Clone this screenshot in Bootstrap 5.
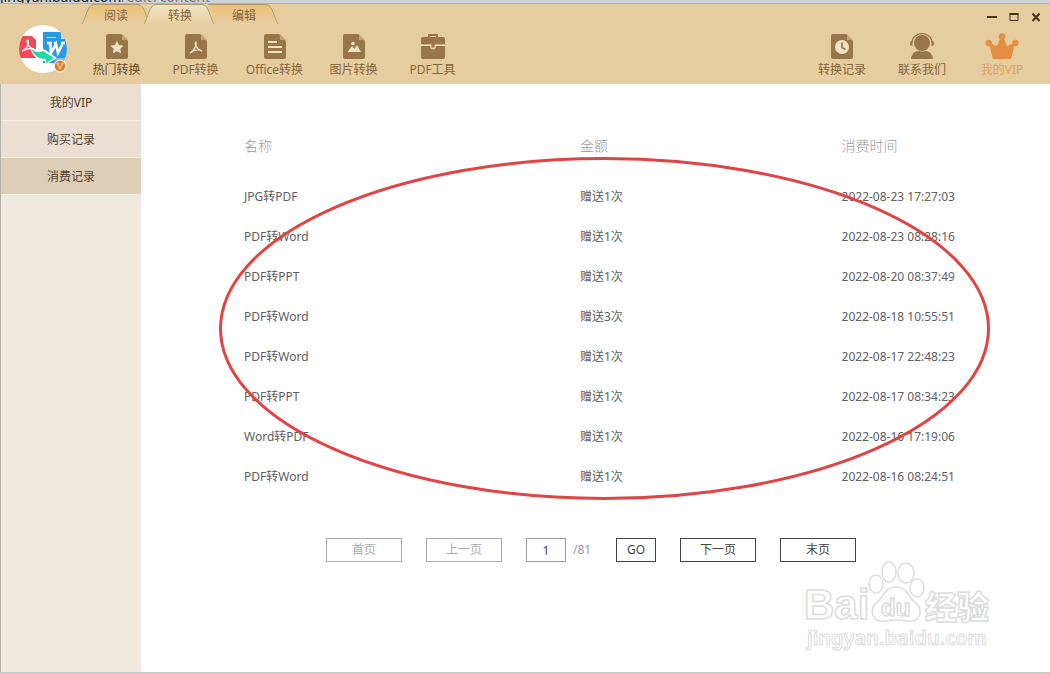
<!DOCTYPE html>
<html lang="zh-CN">
<head>
<meta charset="utf-8">
<meta name="viewport" content="width=device-width, initial-scale=1">
<title>消费记录</title>
<link href="https://cdn.jsdelivr.net/npm/bootstrap@5.3.0/dist/css/bootstrap.min.css" rel="stylesheet">
<style>
body{font-family:"Noto Sans","Noto Sans CJK SC",sans-serif;font-size:12px;line-height:18px;color:#555;background:#fff}
button{font-family:inherit}
.backdrop{height:4px;background:#cfd2d6;border-bottom:1px solid #b9b3a6}
.backdrop span{font-size:14px;line-height:12px;color:#222;white-space:nowrap}
.backdrop .dim{color:#777}
.app-head{background:#e5cda0;color:#86663c}
.tab-row{height:20px;padding-left:84px}
.tab-btn{width:64px;height:20px;padding:0;border:0;background:none;color:#86663c;font-size:12px;line-height:24px}
.tab-btn svg{left:-4px;top:0}
.tab-btn span{position:relative}
.tab-btn.current{z-index:1}
.win-ctl{gap:8px;padding-right:7px}
.win-ctl button{width:14px;height:14px;padding:0;border:0;background:none;line-height:0}
.tool-row{height:60px;padding-left:18px;padding-right:8px}
.logo{width:59px;padding-top:1px}
.tool{height:60px;width:79px;padding:4px 0 0;border:0;background:none;color:#86663c;font-size:12px;line-height:18px;text-align:center;white-space:nowrap}
.tool svg{display:block;margin:0 auto 2px}
.tool.wide{width:80px}
.tool.hot{color:#6b4a22}
.tool.vip{color:#e3a064}
.side{width:141px;background:#f1eadf;border-left:1px solid #b5b0a8}
.side a{height:37px;line-height:38px;text-align:center;text-decoration:none;color:#54412e;background:#eadfd2;border-bottom:1px solid #f5efe6}
.side a.active{background:#ddceb8}
.records{padding:31px 71px 0 103px}
.records table{margin:0;width:100%;table-layout:fixed}
.records th,.records td{padding:0;border:0;text-align:left;vertical-align:middle;white-space:nowrap}
.records th{height:62px;font-size:14px;font-weight:300;color:#999}
.records td{height:40px;font-weight:400;color:#606060}
.records .c-name{width:45.7%}
.records .c-sum{width:35.6%}
.pager{gap:24px;padding-right:9px;margin-top:41px}
.pager button{width:76px;height:24px;padding:0;border:1px solid #444;border-radius:0;background:#fff;color:#444;font-size:12px;line-height:22px}
.pager button:disabled{border-color:#aaa;color:#aaa;opacity:1}
.pager .go{width:40px}
.pager label{width:66px;gap:7px;color:#999}
.pager input{width:40px;height:24px;padding:0;border:1px solid #999;border-radius:0;text-align:center;font-size:12px;color:#444}
.ring{left:78px;top:72px}
.water{right:50px;bottom:16px}
.base{height:2px;background:#c9c9c9}
</style>
</head>
<body class="d-flex flex-column min-vh-100">
<div class="backdrop d-flex align-items-end overflow-hidden"><span>jingyan.baidu.com</span><span class="dim">/edit7content</span></div>

<header class="app-head">
  <div class="tab-row d-flex justify-content-between">
    <nav class="d-flex">
      <button class="tab-btn position-relative"><svg class="position-absolute" width="72" height="20" viewBox="0 0 72 20"><defs><linearGradient id="g1" x2="0" y2="1"><stop stop-color="#edbf73"/><stop offset="1" stop-color="#e6cfa1"/></linearGradient></defs><path d="M2 20C6 14 7 1 14 .5H58C65 1 66 14 70 20" fill="url(#g1)" stroke="#b39a6b"/></svg><span>阅读</span></button>
      <button class="tab-btn current position-relative"><svg class="position-absolute" width="72" height="20" viewBox="0 0 72 20"><defs><linearGradient id="g2" x2="0" y2="1"><stop stop-color="#f3e3c3"/><stop offset="1" stop-color="#e6cfa3"/></linearGradient></defs><path d="M0 20C4 14 5 1 12 .5H58C65 1 66 14 70 20" fill="url(#g2)" stroke="#b39a6b"/></svg><span>转换</span></button>
      <button class="tab-btn position-relative"><svg class="position-absolute" width="72" height="20" viewBox="0 0 72 20"><path d="M5 .5H58C65 1 66 14 70 20H7C4 14 4 1 0 .5Z" fill="url(#g1)"/><path d="M0 .5H58C65 1 66 14 70 20" fill="none" stroke="#b39a6b"/></svg><span>编辑</span></button>
    </nav>
    <div class="win-ctl d-flex align-items-end">
      <button aria-label="最小化"><svg width="14" height="14"><path d="M2 7H12" stroke="#4a3512" stroke-width="2"/></svg></button>
      <button aria-label="最大化"><svg width="14" height="14"><path d="M3 3.500H11V10.500H3Z" fill="none" stroke="#4a3512"/><path d="M2.500 4H11.500" stroke="#4a3512" stroke-width="2"/></svg></button>
      <button aria-label="关闭"><svg width="14" height="14"><path d="M3.500 3.500L10.500 11M10.500 3.500L3.500 11" stroke="#4a3512" stroke-width="2"/></svg></button>
    </div>
  </div>
  <div class="tool-row d-flex">
    <div class="logo">
      <svg width="50" height="50" viewBox="0 0 50 50">
        <defs><clipPath id="disc"><circle cx="25" cy="24" r="24"/></clipPath></defs>
        <circle cx="25" cy="24" r="24" fill="#fff"/>
        <g clip-path="url(#disc)">
          <path d="M0 11H14L18 15V33H0Z" fill="#f04a5a"/>
          <path d="M25 7H43L50 13V38H25Z" fill="#2b98e3"/><path d="M43 7L50 14H43Z" fill="#bfe2fa"/>
          <path d="M29 12.500H38" stroke="#b6dcf7"/>
          <path d="M4 26C8 25 12 18 10 15C8 15 9 22 16 24C12 22 7 25 4 26Z" fill="none" stroke="#fff" stroke-width="1.200"/>
          <path d="M32 18L33 28L38 19L40 28L45 18M29 18H34M36 18H39M43 18H47" fill="none" stroke="#fff" stroke-width="2.600"/>
          <path d="M31 34H49" stroke="#b6dcf7"/>
          <path d="M12 22L19 25Q23 27 25 24L29 26L39 33L27 40V36Q15 35 12 22Z" fill="#fff"/>
          <path d="M13 24Q19 29 25 26L36 33L28 38V34Q17 34 13 24Z" fill="#1fd9a0"/>
        </g>
        <circle cx="42" cy="41" r="6.500" fill="#fff"/><circle cx="42" cy="41" r="5.400" fill="#e17f2a"/>
        <path d="M39.500 38.500L42 44L44.500 38.500M38.500 38.500H41M43.500 38.500H45.500" fill="none" stroke="#fbe2c4"/>
      </svg>
    </div>
    <button class="tool hot"><svg width="26" height="26" viewBox="0 0 26 26"><path d="M4 1H17L24 8V24Q24 26 22 26H4Q2 26 2 24V3Q2 1 4 1Z" fill="#97764a"/><path d="M18 1L24 7H18Z" fill="#c7a273"/><path d="M13 8L15 12L19.500 12.700L16.300 15.800L17 20.300L13 18.200L9 20.300L9.700 15.800L6.500 12.700L11 12Z" fill="#f3e2c0"/></svg>热门转换</button>
    <button class="tool"><svg width="26" height="26" viewBox="0 0 26 26"><path d="M4 1H17L24 8V24Q24 26 22 26H4Q2 26 2 24V3Q2 1 4 1Z" fill="#97764a"/><path d="M18 1L24 7H18Z" fill="#c7a273"/><path d="M7 20C11 18 14 12 13 9C11 10 14 17 19 18C15 16 11 17 7 20Z" fill="none" stroke="#f3e2c0" stroke-width="1.300"/></svg>PDF转换</button>
    <button class="tool"><svg width="26" height="26" viewBox="0 0 26 26"><path d="M4 1H17L24 8V24Q24 26 22 26H4Q2 26 2 24V3Q2 1 4 1Z" fill="#97764a"/><path d="M18 1L24 7H18Z" fill="#c7a273"/><path d="M6 9H15M6 14H20M6 19H20" stroke="#f3e2c0" stroke-width="2"/></svg>Office转换</button>
    <button class="tool"><svg width="26" height="26" viewBox="0 0 26 26"><path d="M4 1H17L24 8V24Q24 26 22 26H4Q2 26 2 24V3Q2 1 4 1Z" fill="#97764a"/><path d="M18 1L24 7H18Z" fill="#c7a273"/><path d="M6.500 19L11 13L13.500 16L16 12L20 19Z" fill="#f3e2c0"/><circle cx="12" cy="10.500" r="1.800" fill="#f3e2c0"/></svg>图片转换</button>
    <button class="tool"><svg width="26" height="26" viewBox="0 0 26 26"><path d="M9 5V2H17V5" fill="none" stroke="#97764a" stroke-width="2"/><path d="M3 4H23Q25 4 25 6V11.500H1V6Q1 4 3 4ZM1 13H10Q10 16.500 13 16.500Q16 16.500 16 13H25V24Q25 26 23 26H3Q1 26 1 24Z" fill="#97764a"/><path d="M1 12.200H25" stroke="#f3e2c0"/><path d="M11.500 11H14.500V14Q13 15.500 11.500 14Z" fill="#97764a"/></svg>PDF工具</button>
    <div class="d-flex ms-auto">
      <button class="tool wide"><svg width="26" height="26" viewBox="0 0 26 26"><path d="M4 1H17L24 8V24Q24 26 22 26H4Q2 26 2 24V3Q2 1 4 1Z" fill="#97764a"/><path d="M18 1L24 7H18Z" fill="#c7a273"/><circle cx="13" cy="14" r="7" fill="#f3e2c0"/><path d="M13 9.500V14.500L16.500 16.500" fill="none" stroke="#97764a" stroke-width="1.600"/></svg>转换记录</button>
      <button class="tool wide"><svg width="26" height="26" viewBox="0 0 26 26"><circle cx="13" cy="10" r="8" fill="#97764a"/><path d="M3 10C3-2.500 23-2.500 23 10" fill="none" stroke="#97764a" stroke-width="1.300"/><path d="M3.500 8Q1 8 1 10.500Q1 13 3.500 13ZM22.500 8Q25 8 25 10.500Q25 13 22.500 13Z" fill="#97764a"/><path d="M2 26Q3 18 10 18Q13 19 16 18Q23 18 24 26Z" fill="#97764a"/></svg>联系我们</button>
      <button class="tool wide vip"><svg width="34" height="26" viewBox="0 0 34 26" fill="#e58d43"><circle cx="17" cy="3.500" r="3.300"/><circle cx="3.700" cy="10" r="3.200"/><circle cx="30.300" cy="10" r="3.200"/><path d="M4 10L12 13L15.500 5H18.500L22 13L30 10L26 26.500Q17 27.500 8 26.500Z"/></svg>我的VIP</button>
    </div>
  </div>
</header>

<div class="d-flex flex-grow-1">
  <aside class="side d-flex flex-column flex-shrink-0">
    <a href="#">我的VIP</a>
    <a href="#">购买记录</a>
    <a href="#" class="active">消费记录</a>
  </aside>
  <main class="flex-grow-1 position-relative">
    <section class="records">
      <table>
        <thead><tr><th class="c-name">名称</th><th class="c-sum">金额</th><th>消费时间</th></tr></thead>
        <tbody>
          <tr><td>JPG转PDF</td><td>赠送1次</td><td>2022-08-23 17:27:03</td></tr>
          <tr><td>PDF转Word</td><td>赠送1次</td><td>2022-08-23 08:28:16</td></tr>
          <tr><td>PDF转PPT</td><td>赠送1次</td><td>2022-08-20 08:37:49</td></tr>
          <tr><td>PDF转Word</td><td>赠送3次</td><td>2022-08-18 10:55:51</td></tr>
          <tr><td>PDF转Word</td><td>赠送1次</td><td>2022-08-17 22:48:23</td></tr>
          <tr><td>PDF转PPT</td><td>赠送1次</td><td>2022-08-17 08:34:23</td></tr>
          <tr><td>Word转PDF</td><td>赠送1次</td><td>2022-08-16 17:19:06</td></tr>
          <tr><td>PDF转Word</td><td>赠送1次</td><td>2022-08-16 08:24:51</td></tr>
        </tbody>
      </table>
    </section>
    <div class="pager d-flex justify-content-center">
      <button disabled>首页</button>
      <button disabled>上一页</button>
      <label class="d-flex align-items-center"><input type="text" value="1"><span>/81</span></label>
      <button class="go">GO</button>
      <button>下一页</button>
      <button>末页</button>
    </div>
    <svg class="ring position-absolute pe-none" width="771" height="345" viewBox="0 0 771 345"><ellipse cx="385.500" cy="172.500" rx="384" ry="170" fill="none" stroke="#e04444" stroke-width="3"/></svg>
    <svg class="water position-absolute pe-none" width="200" height="100" viewBox="0 0 200 100" fill="#fff" stroke="#dcdcdc" stroke-width="1.500">
      <text x="4" y="63" font-family="Liberation Sans, sans-serif" font-weight="700" font-size="42">Bai</text>
      <ellipse cx="76" cy="28" rx="7" ry="9"/><ellipse cx="89" cy="16" rx="7" ry="10"/><ellipse cx="106" cy="17" rx="8" ry="10"/><ellipse cx="117" cy="32" rx="7" ry="9"/>
      <path d="M96 31C84 31 84 42 76 47C68 55 74 67 84 65Q96 63 107 65C120 67 124 55 116 47C108 42 108 31 96 31Z"/>
      <text x="81" y="60" font-family="Liberation Sans, sans-serif" font-weight="700" font-size="24">du</text>
      <text x="125" y="63" font-family="Noto Sans CJK SC, sans-serif" font-weight="900" font-size="32">经验</text>
      <text x="7" y="89" font-family="Noto Sans, sans-serif" font-weight="600" font-size="20" stroke-width="1">jingyan.baidu.com</text>
    </svg>
  </main>
</div>
<div class="base"></div>
<script src="https://cdn.jsdelivr.net/npm/bootstrap@5.3.0/dist/js/bootstrap.bundle.min.js"></script>
</body>
</html>
